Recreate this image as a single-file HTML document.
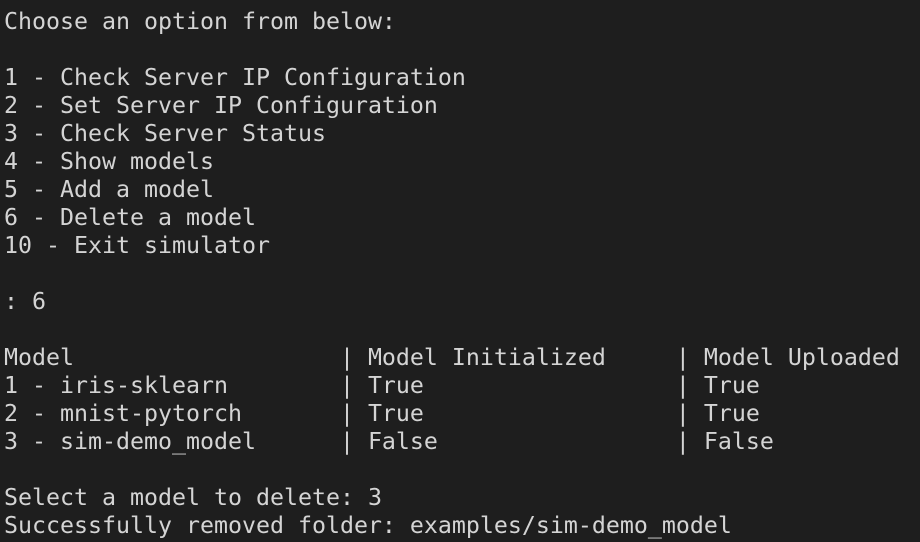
<!DOCTYPE html>
<html><head><style>
html,body{margin:0;padding:0;background:#1e1e1e;width:920px;height:542px;overflow:hidden}
pre{margin:0;padding:8px 0 0 4px;font-family:"DejaVu Sans Mono","Liberation Mono",monospace;font-size:23.25px;line-height:28px;color:#d4d4d4;white-space:pre}
</style></head><body><pre>Choose an option from below:

1 - Check Server IP Configuration
2 - Set Server IP Configuration
3 - Check Server Status
4 - Show models
5 - Add a model
6 - Delete a model
10 - Exit simulator

: 6

Model                   | Model Initialized     | Model Uploaded
1 - iris-sklearn        | True                  | True
2 - mnist-pytorch       | True                  | True
3 - sim-demo_model      | False                 | False

Select a model to delete: 3
Successfully removed folder: examples/sim-demo_model</pre></body></html>
